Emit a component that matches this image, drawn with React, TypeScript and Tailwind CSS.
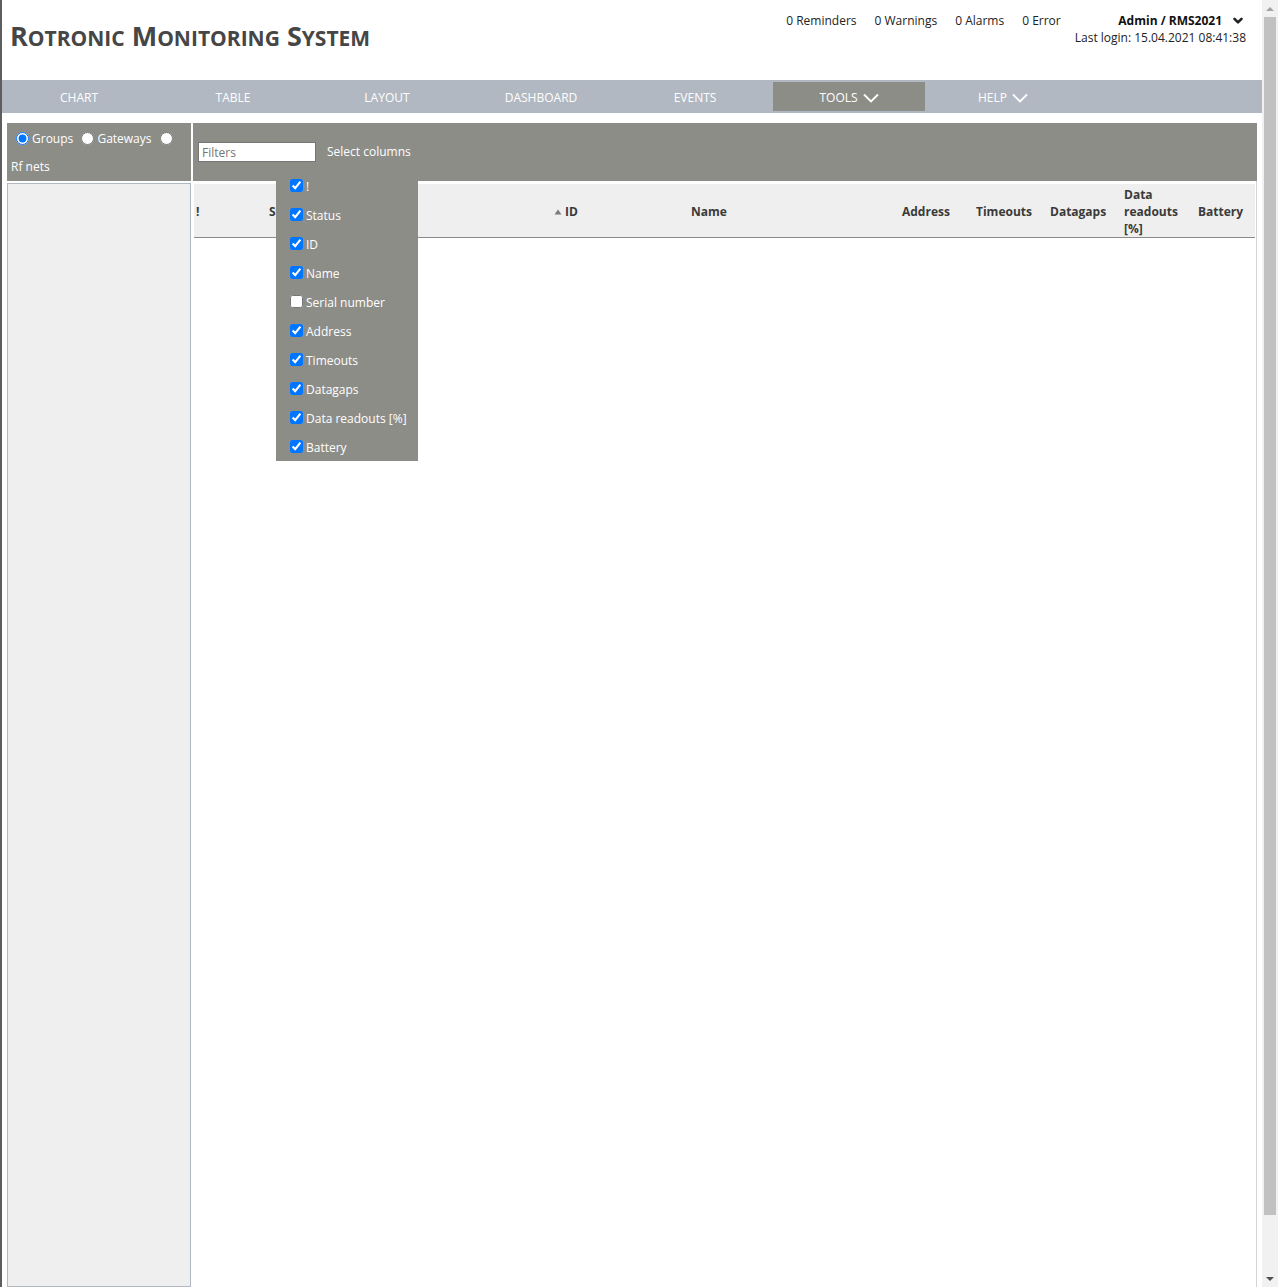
import React from "react";

const font = "font-['Open_Sans','Noto_Sans',sans-serif]";

const navItems = ["CHART", "TABLE", "LAYOUT", "DASHBOARD", "EVENTS", "TOOLS", "HELP"];

const columns: { label: string; checked: boolean }[] = [
  { label: "!", checked: true },
  { label: "Status", checked: true },
  { label: "ID", checked: true },
  { label: "Name", checked: true },
  { label: "Serial number", checked: false },
  { label: "Address", checked: true },
  { label: "Timeouts", checked: true },
  { label: "Datagaps", checked: true },
  { label: "Data readouts [%]", checked: true },
  { label: "Battery", checked: true },
];

function ThinChevron() {
  return (
    <svg width="16" height="10" viewBox="0 0 16 10" className="ml-[5px]">
      <polyline points="1,1.5 8,8.5 15,1.5" fill="none" stroke="white" strokeWidth="1.8" />
    </svg>
  );
}

function SolidChevron() {
  return (
    <svg width="10" height="8" viewBox="0 0 10 8">
      <polyline points="1.5,1.8 5,5.3 8.5,1.8" fill="none" stroke="#222" strokeWidth="2.6" strokeLinecap="round" strokeLinejoin="round" />
    </svg>
  );
}

// Small-caps title: capitals full size, the rest as smaller capitals
function Title() {
  const words = ["Rotronic", "Monitoring", "System"];
  return (
    <div className="flex items-baseline gap-[7px] pl-[8px] pt-[20px] font-bold leading-[32px] text-[#464646]">
      {words.map((w) => (
        <span key={w}>
          <span className="text-[27px]">{w[0]}</span>
          <span className="text-[21px] uppercase">{w.slice(1)}</span>
        </span>
      ))}
    </div>
  );
}

function Header() {
  return (
    <div className="flex h-[80px] justify-between">
      <Title />
      <div className="flex pr-[16px] pt-[11px] text-[12px] leading-[20px] text-[#222]">
        <div className="mr-[14px] flex gap-[18px]">
          <span>0 Reminders</span>
          <span>0 Warnings</span>
          <span>0 Alarms</span>
          <span>0 Error</span>
        </div>
        <div className="flex flex-col items-end">
          <div className="flex items-center gap-[11px] pr-[3px] font-bold text-[#111]">
            <span>Admin / RMS2021</span>
            <SolidChevron />
          </div>
          <div className="-mt-[3px]">Last login: 15.04.2021 08:41:38</div>
        </div>
      </div>
    </div>
  );
}

function Nav() {
  return (
    <div className="flex h-[33px] bg-[#b1b8c2] text-[12px] text-white">
      {navItems.map((item) => {
        const active = item === "TOOLS";
        const dropdown = item === "TOOLS" || item === "HELP";
        return (
          <div key={item} className="flex w-[154px] px-[1px] py-[2px]">
            <div
              className={
                active
                  ? "flex flex-1 items-center justify-center bg-[#8d8d88] pt-[2px]"
                  : "flex flex-1 items-center justify-center pt-[2px]"
              }
            >
              <span>{item}</span>
              {dropdown && <ThinChevron />}
            </div>
          </div>
        );
      })}
    </div>
  );
}

function SideBar() {
  return (
    <div className="flex w-[184px] flex-col">
      <div className="h-[58px] bg-[#8d8d88] pl-[4px] pt-[2px] text-[12px] leading-[27px] text-white">
        <label className="inline-flex items-center">
          <input type="radio" name="tree" defaultChecked className="mx-[3px] ml-[5px] h-[13px] w-[13px]" />
          Groups
        </label>{" "}
        <label className="inline-flex items-center">
          <input type="radio" name="tree" className="mx-[3px] ml-[5px] h-[13px] w-[13px]" />
          Gateways
        </label>{" "}
        <label className="inline-flex items-center">
          <input type="radio" name="tree" className="mx-[3px] ml-[5px] h-[13px] w-[13px]" />
        </label>
        <div className="-mt-[1px]">Rf nets</div>
      </div>
      <div className="mt-[2px] flex-1 border border-[#b1b8c2] bg-[#efefef]" />
    </div>
  );
}

function SortArrow() {
  return (
    <svg width="8" height="6" viewBox="0 0 8 6" className="mr-[3px]">
      <polygon points="4,0.5 7.5,5.5 0.5,5.5" fill="#7a7a7a" />
    </svg>
  );
}

function TableHeader() {
  const cell = "flex items-center pl-[2px] pt-[2px]";
  return (
    <div className="flex h-[54px] border-b border-[#8a8a8a] bg-[#efefef] text-[12px] font-bold leading-[17px] text-[#3a3a3a]">
      <div className={`${cell} w-[73px]`}>!</div>
      <div className={`${cell} w-[285px]`}>Status</div>
      <div className={`${cell} w-[137px]`}>
        <SortArrow />
        ID
      </div>
      <div className={`${cell} w-[211px]`}>Name</div>
      <div className={`${cell} w-[74px]`}>Address</div>
      <div className={`${cell} w-[74px]`}>Timeouts</div>
      <div className={`${cell} w-[74px]`}>Datagaps</div>
      <div className={`${cell} w-[74px] pr-[6px]`}>Data readouts [%]</div>
      <div className={`${cell} w-[59px]`}>Battery</div>
    </div>
  );
}

function ColumnMenu() {
  return (
    <div className="absolute left-[83px] top-[48px] z-10 w-[142px] bg-[#8d8d88] pl-[10px] text-[12px] text-white">
      {columns.map((c) => (
        <label key={c.label} className="flex h-[29px] items-center pt-[2px]">
          <input
            type="checkbox"
            defaultChecked={c.checked}
            className="mb-[3px] ml-[4px] mr-[3px] h-[13px] w-[13px]"
          />
          <span>{c.label}</span>
        </label>
      ))}
    </div>
  );
}

function MainPanel() {
  return (
    <div className="relative flex w-[1064px] flex-col">
      <div className="flex h-[58px] items-center bg-[#8d8d88] pl-[5px] text-[12px] text-white">
        <input
          placeholder="Filters"
          className="h-[20px] w-[118px] border border-[#767676] bg-white px-[3px] text-[12px] text-[#222] outline-none placeholder:text-[#757575]"
        />
        <span className="ml-[11px]">Select columns</span>
      </div>
      <div className="flex-1 border-r border-[#d4d4d4] pl-[1px] pr-[1px] pt-[3px]">
        <TableHeader />
      </div>
      <ColumnMenu />
    </div>
  );
}

function ScrollBar() {
  return (
    <div className="flex w-[16px] flex-col bg-[#f1f1f1]">
      <div className="flex h-[17px] items-center justify-center">
        <svg width="8" height="4" viewBox="0 0 8 4">
          <polygon points="4,0 8,4 0,4" fill="#a3a3a3" />
        </svg>
      </div>
      <div className="mx-[2px] h-[1198px] bg-[#c1c1c1]" />
      <div className="flex-1" />
      <div className="flex h-[17px] items-center justify-center">
        <svg width="8" height="4" viewBox="0 0 8 4">
          <polygon points="0,0 8,0 4,4" fill="#505050" />
        </svg>
      </div>
    </div>
  );
}

export default function App() {
  return (
    <div className={`flex h-[1287px] w-[1278px] overflow-hidden bg-white ${font}`}>
      <div className="flex w-[1262px] flex-col border-l-2 border-[#5e5e5e]">
        <Header />
        <Nav />
        <div className="flex flex-1 gap-[2px] pl-[5px] pt-[10px]">
          <SideBar />
          <MainPanel />
        </div>
      </div>
      <ScrollBar />
    </div>
  );
}
